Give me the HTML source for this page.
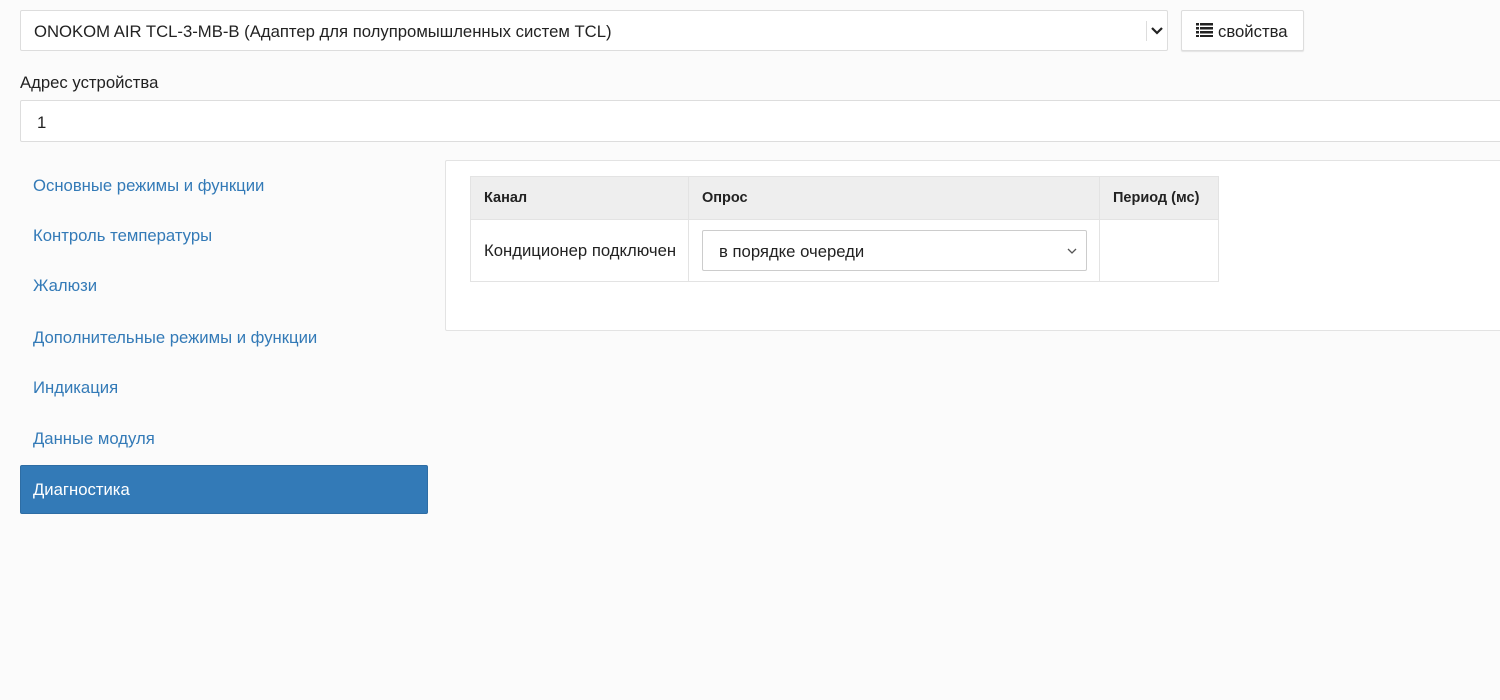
<!DOCTYPE html>
<html><head><meta charset="utf-8"><style>
*{box-sizing:border-box;margin:0;padding:0}
body{width:1500px;height:700px;background:#fbfbfb;font-family:"Liberation Sans","Noto Sans CJK SC",sans-serif;font-size:16.7px;color:#222;position:relative;overflow:hidden}
.abs{position:absolute}
.box{background:#fff;border:1px solid #ddd;border-radius:2px}
.nav a{position:absolute;left:33px;color:#337ab7;font-size:16.7px;text-decoration:none}
table{border-collapse:collapse;position:absolute;left:470px;top:176px;background:#fff;table-layout:fixed}
td,th{border:1px solid #e3e3e3;text-align:left;padding:0 13px}
th{background:#eee;font-size:14.5px;font-weight:bold;height:43px}
td{height:62px;font-size:16.7px}
</style></head><body>
<div class="abs box" style="left:20px;top:10px;width:1148px;height:41px"></div>
<div class="abs" style="left:34px;top:22px">ONOKOM AIR TCL-3-MB-B (Адаптер для полупромышленных систем TCL)</div>
<div class="abs" style="left:1146px;top:21px;width:1px;height:20px;background:#ddd"></div>
<svg class="abs" style="left:1151px;top:27px" width="12" height="9"><path d="M1 1 L6 6 L11 1" stroke="#222" stroke-width="2.2" fill="none"/></svg>
<div class="abs box" style="left:1181px;top:10px;width:123px;height:41px;box-shadow:0 1px 1px rgba(0,0,0,.1)"></div>
<svg class="abs" style="left:1196px;top:23px" width="18" height="14"><g fill="#222"><rect x="0" y="0" width="3" height="2.5"/><rect x="4" y="0" width="13" height="2.5"/><rect x="0" y="4" width="3" height="2.5"/><rect x="4" y="4" width="13" height="2.5"/><rect x="0" y="8" width="3" height="2.5"/><rect x="4" y="8" width="13" height="2.5"/><rect x="0" y="12" width="3" height="2"/><rect x="4" y="12" width="13" height="2"/></g></svg>
<div class="abs" style="left:1218px;top:22px">свойства</div>
<div class="abs" style="left:20px;top:73px">Адрес устройства</div>
<div class="abs box" style="left:20px;top:100px;width:1490px;height:42px"></div>
<div class="abs" style="left:37px;top:113px">1</div>
<div class="nav">
<a style="top:176px">Основные режимы и функции</a>
<a style="top:226px">Контроль температуры</a>
<a style="top:276px">Жалюзи</a>
<a style="top:328px">Дополнительные режимы и функции</a>
<a style="top:378px">Индикация</a>
<a style="top:429px">Данные модуля</a>
</div>
<div class="abs" style="left:20px;top:465px;width:408px;height:49px;background:#337ab7;border:1px solid #2e6da4;border-radius:2px"></div>
<div class="abs" style="left:33px;top:480px;color:#fff">Диагностика</div>
<div class="abs box" style="left:445px;top:160px;width:1070px;height:171px;border-color:#e3e3e3"></div>
<table style="width:748px">
<col style="width:218px"><col style="width:411px"><col style="width:119px">
<tr><th>Канал</th><th>Опрос</th><th>Период (мс)</th></tr>
<tr><td style="white-space:nowrap">Кондиционер подключен</td><td><div style="position:relative;width:385px;height:41px;border:1px solid #ccc;border-radius:2px;background:#fff"><span style="position:absolute;left:16px;top:11px">в порядке очереди</span><svg style="position:absolute;right:9px;top:17px" width="10" height="7"><path d="M1 1 L5 5 L9 1" stroke="#555" stroke-width="1.3" fill="none"/></svg></div></td><td></td></tr>
</table>
</body></html>
